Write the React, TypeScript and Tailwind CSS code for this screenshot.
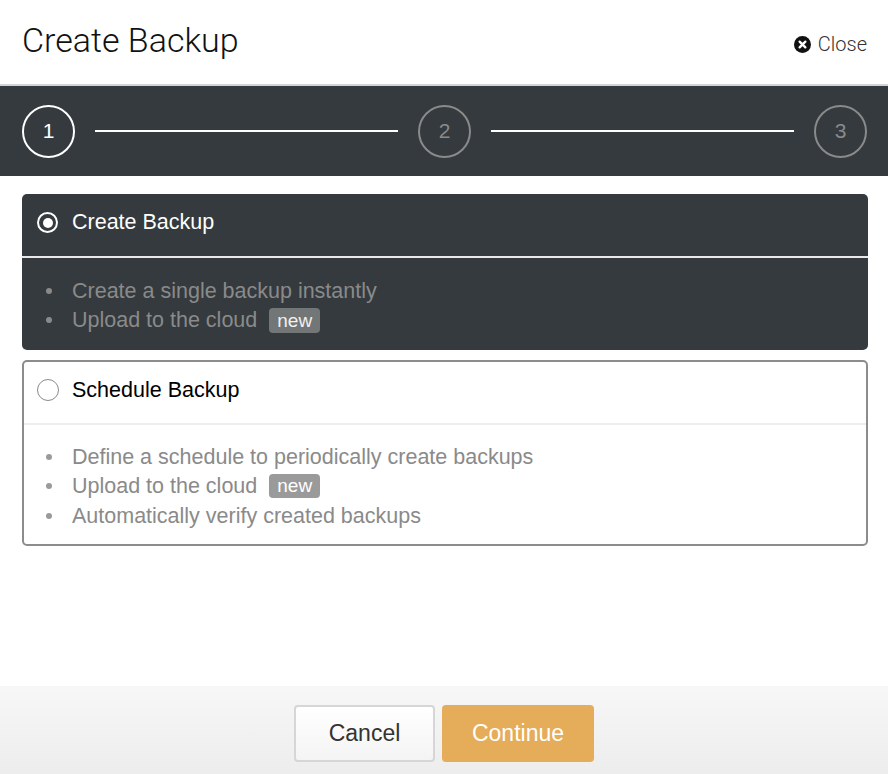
import React from 'react';

const sans = { fontFamily: '"Liberation Sans", Arial, sans-serif' };
const light = { fontFamily: 'Roboto, "Liberation Sans", sans-serif' };

interface OptionProps {
    title: string;
    selected: boolean;
    items: { text: string; isNew?: boolean }[];
}

const Radio = ({ selected }: { selected: boolean }) =>
    selected ? (
        <span className="w-[21px] h-[21px] rounded-full border-[2.5px] border-white flex items-center justify-center">
            <span className="w-[10px] h-[10px] rounded-full bg-white" />
        </span>
    ) : (
        <span className="w-[22px] h-[22px] rounded-full border-[1.5px] border-[#8a8a8a] bg-white" />
    );

const Option = ({ title, selected, items }: OptionProps) => {
    return (
        <div
            className={
                selected
                    ? 'rounded-[5px] bg-[#343a3e] text-white'
                    : 'rounded-[5px] border-2 border-[#8c8c8c] bg-white text-black'
            }
        >
            <div className={selected ? 'h-[62px] flex items-center gap-[14px] pl-[15px] pb-[5px]' : 'h-[61px] flex items-center gap-[13px] pl-[13px] pb-[5px]'}>
                <Radio selected={selected} />
                <span className="text-[21.5px]">{title}</span>
            </div>
            <div className={selected ? 'h-[2px] bg-[#e8e8e8]' : 'h-[2px] bg-[#eeeeee]'} />
            <ul className={selected ? 'pt-[18px] pb-[15px]' : 'pt-[17px] pb-[13px]'}>
                {items.map((item, i) => (
                    <li key={i} className="h-[29.5px] flex items-center text-[21.5px] text-[#8a8a8a]">
                        <span className={selected ? 'w-[6px] h-[6px] rounded-full bg-[#8a8a8a] ml-[24px] mr-[20px]' : 'w-[6px] h-[6px] rounded-full bg-[#9a9a9a] ml-[22px] mr-[20px]'} />
                        <span>{item.text}</span>
                        {item.isNew && (
                            <span
                                className={
                                    selected
                                        ? 'ml-[12px] px-[8px] h-[25px] leading-[25px] rounded-[4px] bg-[#737677] text-[#f0f0f0] text-[19px]'
                                        : 'ml-[12px] px-[8px] h-[24px] leading-[24px] rounded-[4px] bg-[#9a9a9a] text-white text-[19px]'
                                }
                            >
                                new
                            </span>
                        )}
                    </li>
                ))}
            </ul>
        </div>
    );
};

const Step = ({ n, active }: { n: number; active?: boolean }) => (
    <div
        className={
            active
                ? 'w-[53px] h-[53px] rounded-full border-2 border-white text-white flex items-center justify-center text-[21px]'
                : 'w-[53px] h-[53px] rounded-full border-2 border-[#8a8a8a] text-[#8a8a8a] flex items-center justify-center text-[21px]'
        }
    >
        {n}
    </div>
);

export default function App() {
    return (
        <div className="w-[888px] h-[774px] flex flex-col bg-white" style={sans}>
            {/* Header */}
            <div className="h-[84px] flex items-start justify-between px-[22px] pt-[20px]">
                <h1 className="text-[34px] font-light text-[#111] leading-[40px]" style={light}>
                    Create Backup
                </h1>
                <button className="flex items-center gap-[7px] mt-[9px] mr-[-1px] text-[20px] font-light text-[#333]" style={light}>
                    <svg width="17" height="17" viewBox="0 0 16 16">
                        <circle cx="8" cy="8" r="8" fill="#111" />
                        <path d="M5.3 5.3 L10.7 10.7 M10.7 5.3 L5.3 10.7" stroke="#fff" strokeWidth="2.2" strokeLinecap="round" />
                    </svg>
                    Close
                </button>
            </div>
            <div className="h-[2px] bg-[#d4d4d4]" />

            {/* Stepper */}
            <div className="h-[90px] bg-[#343a3e] flex items-center pl-[22px] pr-[21px]">
                <Step n={1} active />
                <div className="flex-1 h-[2px] bg-white mx-[20px]" />
                <Step n={2} />
                <div className="flex-1 h-[2px] bg-white mx-[20px]" />
                <Step n={3} />
            </div>

            {/* Options */}
            <div className="flex-1 flex flex-col gap-[10px] pl-[22px] pr-[20px] pt-[18px]">
                <Option
                    title="Create Backup"
                    selected
                    items={[{ text: 'Create a single backup instantly' }, { text: 'Upload to the cloud', isNew: true }]}
                />
                <Option
                    title="Schedule Backup"
                    selected={false}
                    items={[
                        { text: 'Define a schedule to periodically create backups' },
                        { text: 'Upload to the cloud', isNew: true },
                        { text: 'Automatically verify created backups' }
                    ]}
                />
            </div>

            {/* Footer */}
            <div className="h-[88px] bg-gradient-to-b from-[#f7f7f7] to-[#ededed] flex items-center justify-center gap-[7px] pt-[6px]">
                <button className="w-[141px] h-[57px] rounded-[4px] border-2 border-[#d6d6d6] bg-gradient-to-b from-white to-[#f4f4f4] text-[23px] text-[#333]">
                    Cancel
                </button>
                <button className="w-[152px] h-[57px] rounded-[4px] bg-[#e5ac5a] text-[23px] text-white">
                    Continue
                </button>
            </div>
        </div>
    );
}
